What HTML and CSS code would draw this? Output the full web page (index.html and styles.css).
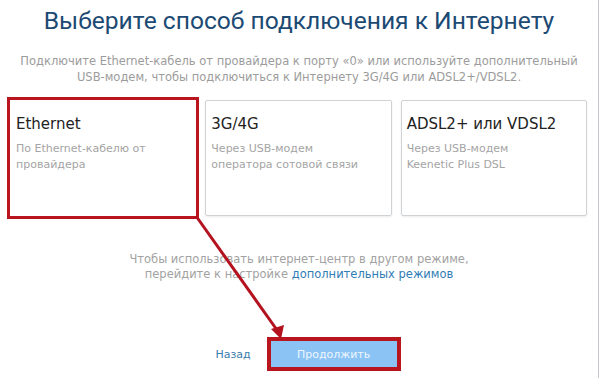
FILE: index.html
```html
<!DOCTYPE html>
<html lang="ru">
<head>
  <meta charset="UTF-8">
  <title>Выбор подключения</title>
  <link rel="stylesheet" href="styles.css">
</head>
<body>

<div class="page">
  <h1 class="title">Выберите способ подключения к Интернету</h1>
  <p class="lead">
    Подключите Ethernet-кабель от провайдера к порту «0» или используйте дополнительный<br>
    USB-модем, чтобы подключиться к Интернету 3G/4G или ADSL2+/VDSL2.
  </p>

  <div class="cards">
    <div class="card marked">
      <div class="card-title">Ethernet</div>
      <div class="card-text">По Ethernet-кабелю от<br>провайдера</div>
    </div>
    <div class="card">
      <div class="card-title">3G/4G</div>
      <div class="card-text">Через USB-модем<br>оператора сотовой связи</div>
    </div>
    <div class="card">
      <div class="card-title">ADSL2+ или VDSL2</div>
      <div class="card-text">Через USB-модем<br>Keenetic Plus DSL</div>
    </div>
  </div>

  <p class="note">
    Чтобы использовать интернет-центр в другом режиме,<br>
    перейдите к настройке <a href="#" class="link">дополнительных режимов</a>
  </p>

  <div class="actions">
    <a href="#" class="back">Назад</a>
    <button class="btn marked">Продолжить</button>
  </div>

  <!-- annotation arrow over the page -->
  <svg class="arrow" width="602" height="378" viewBox="0 0 602 378">
    <line x1="196" y1="216" x2="277" y2="330" stroke="#b3121e" stroke-width="3"/>
    <polygon points="281,339 271,329 284,325" fill="#b3121e"/>
  </svg>
</div>

</body>
</html>
```

FILE: styles.css
```css
html, body {
  margin: 0;
  padding: 0;
  background-color: #ffffff;
}

.page {
  position: relative;
  width: 599px;
  height: 378px;
  box-sizing: border-box;
  border-right: 1px solid #c4c8cc;
  padding: 0 10px 0 10px;
  font-family: "DejaVu Sans", Verdana, sans-serif;
  overflow: hidden;
}

.title {
  margin: 0;
  padding-top: 3px;
  text-align: center;
  font-family: Roboto, "Open Sans", sans-serif;
  font-weight: 400;
  font-size: 24.6px;
  line-height: 36px;
  color: #1c4a73;
}

.lead {
  margin: 14px 0 0 0;
  text-align: center;
  font-size: 11.5px;
  line-height: 16px;
  color: #9c9c9c;
}

.cards {
  display: grid;
  grid-template-columns: 1fr 1fr 1fr;
  gap: 9px;
  margin-top: 15px;
  margin-right: 1px;
}

.card {
  height: 116px;
  box-sizing: border-box;
  border: 1px solid #cfd3d6;
  border-radius: 2px;
  box-shadow: 0 1px 2px rgba(0,0,0,0.08);
  padding: 13px 5px 0 5px;
}

.card-title {
  font-size: 15px;
  line-height: 20px;
  color: #222222;
}

.card-text {
  margin-top: 7px;
  font-size: 11px;
  line-height: 16px;
  color: #a4a4a4;
}

.marked {
  outline: 3px solid #b8151f;
  outline-offset: 0;
}

.card.marked {
  border-color: transparent;
  border-radius: 0;
}

.note {
  margin: 36px 0 0 0;
  text-align: center;
  font-size: 11.5px;
  line-height: 15px;
  color: #a2a2a2;
}

.link {
  color: #2f7db5;
  text-decoration: none;
}

.actions {
  display: flex;
  justify-content: center;
  align-items: center;
  gap: 20px;
  margin-top: 59px;
  margin-left: 14px;
}

.back {
  font-size: 11px;
  color: #3b7dab;
  text-decoration: none;
}

.btn {
  width: 126px;
  height: 26px;
  border: none;
  border-radius: 0;
  background-color: #8bc3f5;
  color: #eef6fd;
  font-family: "DejaVu Sans", Verdana, sans-serif;
  font-size: 11px;
  outline-width: 4px;
}

.arrow {
  position: absolute;
  left: 0;
  top: 0;
  pointer-events: none;
}
```
